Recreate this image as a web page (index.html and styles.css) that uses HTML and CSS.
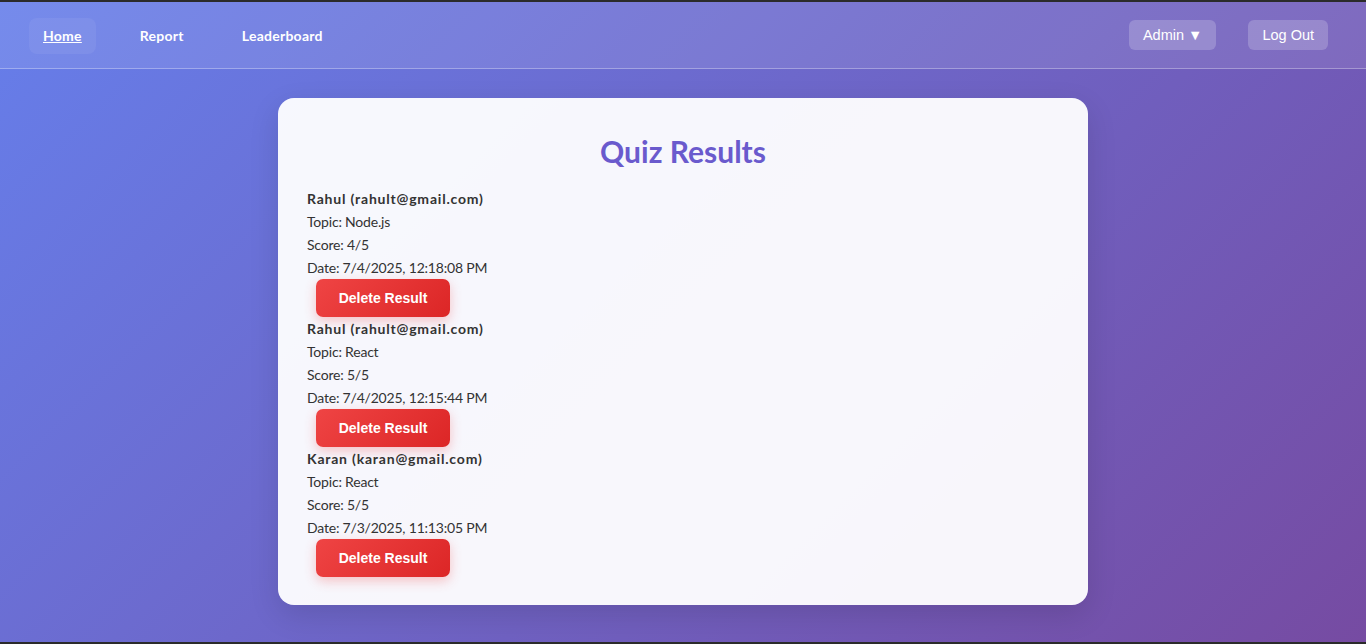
FILE: index.html
```html
<!DOCTYPE html>
<html lang="en">
<head>
<meta charset="utf-8">
<title>Quiz Results</title>
<link rel="stylesheet" href="styles.css">
</head>
<body>
<div class="app">
  <nav class="navbar">
    <div class="nav-links">
      <a class="nav-link active" href="#">Home</a>
      <a class="nav-link" href="#">Report</a>
      <a class="nav-link" href="#">Leaderboard</a>
    </div>
    <div class="nav-actions">
      <button class="nav-btn">Admin ▼</button>
      <button class="nav-btn">Log Out</button>
    </div>
  </nav>
  <main class="main">
    <section class="card">
      <h2 class="title">Quiz Results</h2>
      <div class="result">
        <div class="line name">Rahul (rahult@gmail.com)</div>
        <div class="line">Topic: Node.js</div>
        <div class="line">Score: 4/5</div>
        <div class="line">Date: 7/4/2025, 12:18:08 PM</div>
        <button class="delete-btn">Delete Result</button>
      </div>
      <div class="result">
        <div class="line name">Rahul (rahult@gmail.com)</div>
        <div class="line">Topic: React</div>
        <div class="line">Score: 5/5</div>
        <div class="line">Date: 7/4/2025, 12:15:44 PM</div>
        <button class="delete-btn">Delete Result</button>
      </div>
      <div class="result">
        <div class="line name">Karan (karan@gmail.com)</div>
        <div class="line">Topic: React</div>
        <div class="line">Score: 5/5</div>
        <div class="line">Date: 7/3/2025, 11:13:05 PM</div>
        <button class="delete-btn">Delete Result</button>
      </div>
    </section>
  </main>
</div>
</body>
</html>
```
FILE: styles.css
```css
* { box-sizing: border-box; }
html, body { margin: 0; padding: 0; height: 100%; }
body {
  background: #2b2b2b;
  padding: 2px 0;
  overflow: hidden;
  font-family: Lato, "Open Sans", sans-serif;
}
.app {
  height: 640px;
  background: linear-gradient(135deg, #667eea 0%, #764ba2 100%);
  display: flex;
  flex-direction: column;
}
.navbar {
  height: 67px;
  display: flex;
  justify-content: space-between;
  align-items: center;
  padding: 0 38px 0 29px;
  background: rgba(255, 255, 255, 0.1);
  border-bottom: 1px solid rgba(255, 255, 255, 0.3);
}
.nav-links {
  display: flex;
  gap: 30px;
  padding-top: 2px;
}
.nav-link {
  color: #fff;
  text-decoration: none;
  font-weight: 700;
  font-size: 14px;
  letter-spacing: 0.25px;
  padding: 9px 14px;
  border-radius: 8px;
  line-height: 18px;
}
.nav-link.active {
  text-decoration: underline;
  background: rgba(255, 255, 255, 0.06);
}
.nav-actions {
  display: flex;
  gap: 32px;
}
.nav-btn {
  font-family: "Liberation Sans", Arial, sans-serif;
  font-size: 14.5px;
  color: #fff;
  background: rgba(255, 255, 255, 0.2);
  border: none;
  border-radius: 6px;
  height: 30px;
  padding: 0 14px;
}
.main {
  flex: 1;
  display: flex;
  justify-content: center;
  padding-top: 29px;
}
.card {
  width: 810px;
  height: 507px;
  background: rgba(255, 255, 255, 0.95);
  border-radius: 16px;
  padding: 0 29px;
  box-shadow: 0 10px 30px rgba(0, 0, 0, 0.12);
}
.title {
  margin: 36px 0 19px;
  text-align: center;
  font-size: 30px;
  line-height: 34px;
  font-weight: 700;
  color: #6a5acd;
}
.line {
  font-size: 14px;
  line-height: 23px;
  color: #333;
  letter-spacing: -0.2px;
}
.line.name {
  font-weight: 700;
  letter-spacing: 0.8px;
}
.delete-btn {
  display: block;
  margin-left: 9px;
  width: 134px;
  height: 38px;
  border: none;
  border-radius: 7px;
  background: linear-gradient(135deg, #ef4444, #dc2626);
  color: #fff;
  font-family: "Liberation Sans", Arial, sans-serif;
  font-weight: 700;
  font-size: 14px;
  box-shadow: 0 4px 12px rgba(239, 68, 68, 0.3);
}
```
